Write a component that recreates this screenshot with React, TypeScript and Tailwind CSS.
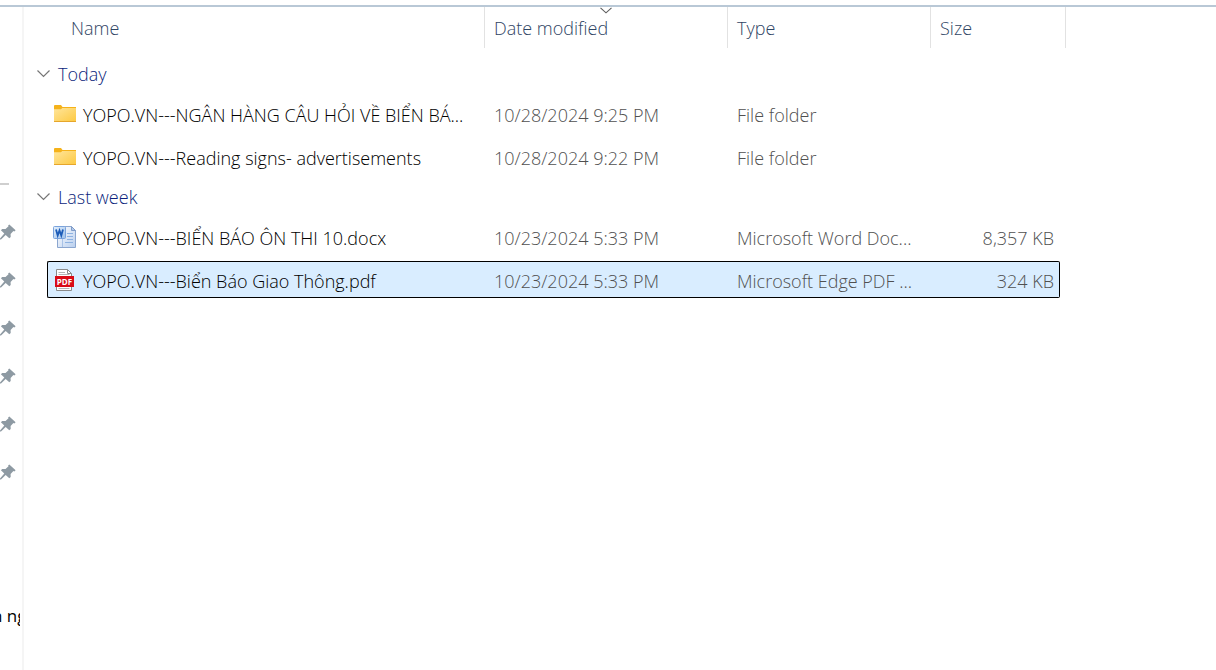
import { useState } from 'react';

type FileKind = 'folder' | 'word' | 'pdf';

interface FileItem {
  name: string;
  modified: string;
  type: string;
  size: string;
  kind: FileKind;
}

const groups: { label: string; files: FileItem[] }[] = [
  {
    label: 'Today',
    files: [
      {
        name: 'YOPO.VN---NGÂN HÀNG CÂU HỎI VỀ BIỂN BÁ...',
        modified: '10/28/2024 9:25 PM',
        type: 'File folder',
        size: '',
        kind: 'folder',
      },
      {
        name: 'YOPO.VN---Reading signs- advertisements',
        modified: '10/28/2024 9:22 PM',
        type: 'File folder',
        size: '',
        kind: 'folder',
      },
    ],
  },
  {
    label: 'Last week',
    files: [
      {
        name: 'YOPO.VN---BIỂN BÁO ÔN THI 10.docx',
        modified: '10/23/2024 5:33 PM',
        type: 'Microsoft Word Doc...',
        size: '8,357 KB',
        kind: 'word',
      },
      {
        name: 'YOPO.VN---Biển Báo Giao Thông.pdf',
        modified: '10/23/2024 5:33 PM',
        type: 'Microsoft Edge PDF ...',
        size: '324 KB',
        kind: 'pdf',
      },
    ],
  },
];

const pins = [0, 1, 2, 3, 4, 5];

function FolderIcon() {
  return (
    <svg width="24" height="24" viewBox="0 0 24 24" aria-hidden="true">
      <defs>
        <linearGradient id="folder" x1="0" y1="0" x2="1" y2="1">
          <stop offset="0" stopColor="#ffe59b" />
          <stop offset="1" stopColor="#fdc940" />
        </linearGradient>
      </defs>
      <path d="M1 4Q1 3 2 3H8L9.5 5H23V12H1Z" fill="#f5b21a" />
      <path d="M1 7.2H8L9.2 6H23V20H1Z" fill="url(#folder)" />
      <path d="M1 19H23V20H1Z" fill="#e6a62c" />
    </svg>
  );
}

function WordIcon() {
  return (
    <svg width="24" height="24" viewBox="0 0 24 24" aria-hidden="true">
      <defs>
        <linearGradient id="page" x1="0" y1="0" x2="1" y2="1">
          <stop offset="0" stopColor="#ffffff" />
          <stop offset="1" stopColor="#b9cfee" />
        </linearGradient>
        <linearGradient id="badge" x1="0" y1="0" x2="1" y2="1">
          <stop offset="0" stopColor="#e4f0fc" />
          <stop offset="1" stopColor="#9dc0ea" />
        </linearGradient>
      </defs>
      <path d="M4.5 1.5H18.5L22.5 5.5V22.5H4.5Z" fill="url(#page)" stroke="#8ba6cf" />
      <path d="M18.5 1.5V5.5H22.5Z" fill="#b5cbea" stroke="#7f9cc9" />
      <path d="M14 8.5H20M14 11.5H20M14 14.5H20M12 17.5H20" stroke="#8db2e2" />
      <rect x="0.5" y="1.5" width="12" height="12" rx="1" fill="url(#badge)" stroke="#7aa3dc" />
      <path d="M3 4.5L4.7 10.5L6.5 5.5L8.3 10.5L10 4.5" fill="none" stroke="#1c5cb8" strokeWidth="1.8" />
      <path d="M9.5 14V22" stroke="#a9c3e8" />
    </svg>
  );
}

function PdfIcon() {
  return (
    <svg width="24" height="24" viewBox="0 0 24 24" aria-hidden="true">
      <path d="M3.5 1.5H14.5L18.5 5.5V22.5H3.5Z" fill="#fff" stroke="#8a8a8a" />
      <path d="M14.5 1.5V5.5H18.5" fill="none" stroke="#8a8a8a" />
      <path d="M5.5 4.5H12M5.5 6.5H16.5M5.5 20.5H16.5" stroke="#b5b5b5" />
      <rect x="2" y="8" width="19" height="11" fill="#d90b16" />
      <text
        x="11.5"
        y="16.5"
        textAnchor="middle"
        fill="#fff"
        className="font-['Open_Sans'] text-[8px] font-bold"
      >
        PDF
      </text>
    </svg>
  );
}

function PinIcon() {
  return (
    <svg width="16" height="18" viewBox="0 0 16 18" aria-hidden="true">
      <path
        d="M9.3 1.5L15.6 7.3L14.4 8.5L13.4 8.1L10.6 11.1L10.7 14L9.3 15.3L5.7 12L1 16.6H0V15.4L4.3 10.6L0.9 7.3L2.2 6L5.5 6.1L8.5 3.3L8.1 2.5Z"
        fill="#8e9aa3"
      />
    </svg>
  );
}

function Chevron() {
  return (
    <svg width="13" height="8" viewBox="0 0 13 8" fill="none" aria-hidden="true">
      <path d="M0.5 0.5L6.5 6.5L12.5 0.5" stroke="#767676" strokeWidth="1.2" />
    </svg>
  );
}

function FileIcon({ kind }: { kind: FileKind }) {
  if (kind === 'folder') return <FolderIcon />;
  if (kind === 'word') return <WordIcon />;
  return <PdfIcon />;
}

function HeaderButton({ label, sorted }: { label: string; sorted?: boolean }) {
  return (
    <button
      type="button"
      className="relative flex h-[41px] w-full items-center border-r border-[#e2e2e2] pt-px pl-[9px] text-left text-[#2f4564]"
    >
      {sorted && (
        <svg
          className="absolute left-1/2 top-0 -translate-x-1/2"
          width="12"
          height="7"
          viewBox="0 0 12 7"
          fill="none"
          aria-hidden="true"
        >
          <path d="M0.5 0.8L6 5.8L11.5 0.8" stroke="#5c5c5c" strokeWidth="1.1" />
        </svg>
      )}
      {label}
    </button>
  );
}

function Sidebar() {
  return (
    <aside className="w-6 shrink-0 overflow-hidden border-r-2 border-[#f5f5f5] pt-44">
      <hr className="w-[9px] border-t-2 border-[#cfcfcf]" />
      <ul className="mt-[23px]">
        {pins.map((pin) => (
          <li key={pin} className="flex h-12 items-center">
            <PinIcon />
          </li>
        ))}
      </ul>
      <div className="mt-[108px] w-5 overflow-hidden">
        <p className="-ml-2 whitespace-nowrap text-[17px] font-normal leading-6 text-black">
          n ng
        </p>
      </div>
    </aside>
  );
}

function App() {
  const [selected, setSelected] = useState('YOPO.VN---Biển Báo Giao Thông.pdf');
  const [closed, setClosed] = useState<string[]>([]);

  const toggleGroup = (label: string) => {
    setClosed((prev) =>
      prev.includes(label) ? prev.filter((l) => l !== label) : [...prev, label]
    );
  };

  return (
    <div className="flex min-h-screen flex-col bg-white pt-[5px] font-['Open_Sans','Noto_Sans',sans-serif] text-lg font-light">
      <div className="flex grow overflow-hidden border-t-2 border-[#b9c8d6]">
        <Sidebar />
        <main className="min-w-0 grow">
          <table className="-mt-1.5 w-[1042px] table-fixed border-separate border-spacing-x-0 border-spacing-y-1.5">
            <colgroup>
              <col className="w-[23px]" />
              <col className="w-[438px]" />
              <col className="w-[243px]" />
              <col className="w-[203px]" />
              <col className="w-[129px]" />
              <col className="w-[6px]" />
            </colgroup>
            <thead>
              <tr className="h-[45px]">
                <th colSpan={2} className="p-0 pl-[38px] align-top font-light">
                  <HeaderButton label="Name" />
                </th>
                <th className="p-0 align-top font-light" aria-sort="descending">
                  <HeaderButton label="Date modified" sorted />
                </th>
                <th className="p-0 align-top font-light">
                  <HeaderButton label="Type" />
                </th>
                <th colSpan={2} className="p-0 align-top font-light">
                  <HeaderButton label="Size" />
                </th>
              </tr>
            </thead>
            {groups.map(({ label, files }) => (
              <tbody key={label}>
                <tr className="h-[31px]">
                  <th colSpan={6} className="p-0 text-left font-light">
                    <button
                      type="button"
                      className="flex items-center gap-2 pl-[13px] leading-6 text-[#0c1f7c]"
                      onClick={() => toggleGroup(label)}
                    >
                      <Chevron />
                      {label}
                    </button>
                  </th>
                </tr>
                {!closed.includes(label) &&
                  files.map((file) => {
                    const active = file.name === selected;
                    const cell = active
                      ? 'border-y border-black bg-[#d9edff]'
                      : 'border-y border-transparent';
                    return (
                      <tr
                        key={file.name}
                        className="h-[37px] cursor-default whitespace-nowrap leading-6 text-[#505050]"
                        aria-selected={active}
                        onClick={() => setSelected(file.name)}
                      >
                        <td className="p-0" />
                        <td
                          className={`rounded-l-xs border-l p-0 pl-[5px] text-black ${cell}`}
                        >
                          <div className="flex items-center gap-1.5">
                            <FileIcon kind={file.kind} />
                            <span className="pt-[3px]">{file.name}</span>
                          </div>
                        </td>
                        <td className={`p-0 pt-[3px] pl-[9px] ${cell}`}>{file.modified}</td>
                        <td className={`p-0 pt-[3px] pl-[9px] ${cell}`}>{file.type}</td>
                        <td
                          className={`rounded-r-xs border-r p-0 pt-[3px] pr-[5px] text-right ${cell}`}
                        >
                          {file.size}
                        </td>
                        <td className="p-0" />
                      </tr>
                    );
                  })}
              </tbody>
            ))}
          </table>
        </main>
      </div>
    </div>
  );
}

export default App;
